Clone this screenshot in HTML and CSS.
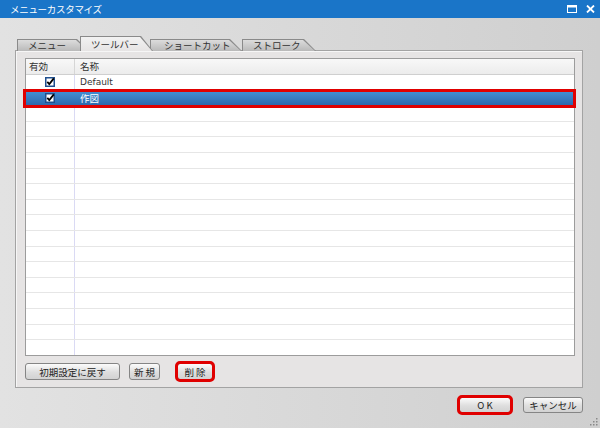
FILE: index.html
```html
<!DOCTYPE html>
<html lang="ja">
<head>
  <meta charset="UTF-8">
  <title>メニューカスタマイズ</title>
  <link rel="stylesheet" href="styles.css">
</head>
<body>
  <div class="window">
    <div class="titlebar">
      <span class="title">メニューカスタマイズ</span>
      <div class="title-btns">
        <svg width="10" height="8" viewBox="0 0 10 8"><rect x="0.5" y="0.5" width="9" height="7" fill="none" stroke="#fff"/><rect x="0" y="0" width="10" height="2.5" fill="#fff"/></svg>
        <svg width="9" height="8" viewBox="0 0 9 8"><path d="M1 0.5 L8 7.5 M8 0.5 L1 7.5" stroke="#fff" stroke-width="1.8"/></svg>
      </div>
    </div>

    <div class="content">
      <div class="tabs">
        <div class="tab t1"><span class="tab-in">メニュー</span></div>
        <div class="tab t2 active"><span class="tab-in">ツールバー</span></div>
        <div class="tab t3"><span class="tab-in">ショートカット</span></div>
        <div class="tab t4"><span class="tab-in">ストローク</span></div>
      </div>

      <div class="panel">
        <div class="list">
          <div class="row head">
            <div class="c1">有効</div>
            <div class="c2">名称</div>
          </div>
          <div class="row">
            <div class="c1 chk">
              <svg width="10" height="10" viewBox="0 0 10 10"><rect x="0.75" y="0.75" width="8.5" height="8.5" fill="#fff" stroke="#1f4f8f" stroke-width="1.5"/><path d="M2.3 4.8 L4.3 7 L8.8 1.4" stroke="#000" stroke-width="1.8" fill="none"/></svg>
            </div>
            <div class="c2 latin">Default</div>
          </div>
          <div class="row selected">
            <div class="c1 chk">
              <svg width="10" height="10" viewBox="0 0 10 10"><rect x="0.75" y="0.75" width="8.5" height="8.5" fill="#fff" stroke="#1f4f8f" stroke-width="1.5"/><path d="M2.3 4.8 L4.3 7 L8.8 1.4" stroke="#000" stroke-width="1.8" fill="none"/></svg>
            </div>
            <div class="c2">作図</div>
          </div>
          <div class="row"><div class="c1"></div><div class="c2"></div></div>
          <div class="row"><div class="c1"></div><div class="c2"></div></div>
          <div class="row"><div class="c1"></div><div class="c2"></div></div>
          <div class="row"><div class="c1"></div><div class="c2"></div></div>
          <div class="row"><div class="c1"></div><div class="c2"></div></div>
          <div class="row"><div class="c1"></div><div class="c2"></div></div>
          <div class="row"><div class="c1"></div><div class="c2"></div></div>
          <div class="row"><div class="c1"></div><div class="c2"></div></div>
          <div class="row"><div class="c1"></div><div class="c2"></div></div>
          <div class="row"><div class="c1"></div><div class="c2"></div></div>
          <div class="row"><div class="c1"></div><div class="c2"></div></div>
          <div class="row"><div class="c1"></div><div class="c2"></div></div>
          <div class="row"><div class="c1"></div><div class="c2"></div></div>
          <div class="row"><div class="c1"></div><div class="c2"></div></div>
          <div class="row"><div class="c1"></div><div class="c2"></div></div>
          <div class="row last"><div class="c1"></div><div class="c2"></div></div>
        </div>

        <div class="panel-btns">
          <button class="btn reset">初期設定に戻す</button>
          <button class="btn new">新 規</button>
          <button class="btn del marked">削 除</button>
        </div>
      </div>

      <div class="footer">
        <button class="btn ok marked">O K</button>
        <button class="btn cancel">キャンセル</button>
      </div>
    </div>

    <svg class="grip" width="9" height="9" viewBox="0 0 9 9">
      <rect x="7" y="1" width="1.5" height="1.5" fill="#8a8a8a"/>
      <rect x="4" y="4" width="1.5" height="1.5" fill="#8a8a8a"/>
      <rect x="7" y="4" width="1.5" height="1.5" fill="#8a8a8a"/>
      <rect x="1" y="7" width="1.5" height="1.5" fill="#8a8a8a"/>
      <rect x="4" y="7" width="1.5" height="1.5" fill="#8a8a8a"/>
      <rect x="7" y="7" width="1.5" height="1.5" fill="#8a8a8a"/>
    </svg>
  </div>
</body>
</html>
```

FILE: styles.css
```css
/* Reset */
* {
  margin: 0;
  padding: 0;
  box-sizing: border-box;
}

body {
  width: 600px;
  height: 428px;
  overflow: hidden;
  font-family: "Noto Sans CJK JP", sans-serif;
  font-size: 9.5px;
  color: #333;
}

.window {
  position: relative;
  width: 600px;
  height: 428px;
  background: linear-gradient(to right, #e2e2e2, #cfcfcf);
}

/* Title bar */
.titlebar {
  height: 18px;
  background: #1a75c8;
  color: #fff;
  display: flex;
  align-items: center;
  justify-content: space-between;
  padding: 0 5px 0 10px;
}

.title {
  font-size: 9.5px;
  letter-spacing: -0.3px;
}

.title-btns {
  display: flex;
  align-items: center;
  gap: 9px;
}

.title-btns svg {
  display: block;
}

/* Tabs */
.content {
  padding: 18px 17px 0 15px;
}

.tabs {
  display: flex;
  align-items: flex-end;
  height: 15px;
  padding-left: 2px;
  position: relative;
  z-index: 1;
  margin-bottom: -1px;
}

.tab {
  height: 12px;
  padding: 1px 1px 0 1px;
  background: #8a8a8a;
  clip-path: polygon(0 0, calc(100% - 12px) 0, 100% 100%, 0 100%);
}

.tab-in {
  display: block;
  height: 100%;
  padding-left: 10px;
  line-height: 11px;
  color: #333;
  background: linear-gradient(#dcdcdc, #b9b9b9);
  clip-path: polygon(0 0, calc(100% - 12px) 0, 100% 100%, 0 100%);
}

.t1 { width: 72px; }
.t2 { width: 73px; margin-left: -9px; }
.t3 { width: 92px; margin-left: -3px; }
.t4 { width: 74px; }

.tab.active {
  height: 15px;
  position: relative;
  z-index: 2;
}

.tab.active .tab-in {
  background: linear-gradient(#f2f2f2, #e6e4e4);
  line-height: 14px;
}

.t3 .tab-in { padding-left: 13px; }

/* Panel */
.panel {
  width: 568px;
  height: 338px;
  border: 1px solid #a3a3a3;
  background: #e6e4e4;
  box-shadow: inset 1px 1px 0 #f6f6f6;
  padding: 7px 7px 6px 9px;
}

.list {
  height: 298px;
  border: 1px solid #9c9c9c;
  background: #fff;
}

.row {
  display: flex;
  height: 15.6px;
  border-bottom: 1px solid #e6e6e6;
  line-height: 14.6px;
}

.row.last {
  height: 15px;
  border-bottom: none;
}

.row .c1 {
  width: 49px;
  flex: none;
  border-right: 1px solid #dadaf4;
}

.row .c2 {
  flex: 1;
  padding-left: 5px;
}

.row.head {
  height: 16px;
  background: linear-gradient(#f8f8f8, #ececec);
  border-bottom: 1px solid #cfcfcf;
}

.row.head .c1 {
  padding-left: 3px;
  border-right-color: #d6d6d6;
}

.chk {
  display: flex;
  align-items: center;
  justify-content: center;
}

.chk svg {
  display: block;
}

.latin {
  font-family: "DejaVu Sans", "Noto Sans CJK JP", sans-serif;
  font-size: 9px;
}

.row.selected {
  background: linear-gradient(#4390d4, #2d69ad);
  color: #fff;
  border-bottom-color: #2d69ad;
  outline: 3px solid #e00000;
  outline-offset: -1px;
  margin-left: -1px;
  position: relative;
}

.row.selected .c1 {
  width: 50px;
  border-right-color: transparent;
}

/* Buttons */
.panel-btns {
  display: flex;
  margin-top: 7px;
}

.btn {
  height: 17px;
  font-family: "Noto Sans CJK JP", sans-serif;
  font-size: 9.5px;
  color: #222;
  background: linear-gradient(#fbfbfb, #dedede 55%, #d2d2d2);
  border: 1px solid #858585;
  border-radius: 3px;
  line-height: 14px;
}

.btn.marked {
  outline: 3px solid #e00000;
  outline-offset: -1px;
}

.reset { width: 95px; }
.new { width: 31px; margin-left: 9px; }
.del { width: 36px; margin-left: 17px; }

.footer {
  display: flex;
  justify-content: flex-end;
  gap: 12px;
  padding-top: 9px;
}

.footer .btn {
  height: 16px;
}

.ok { width: 52px; }
.cancel { width: 60px; }

.grip {
  position: absolute;
  right: 2px;
  bottom: 2px;
}
```
